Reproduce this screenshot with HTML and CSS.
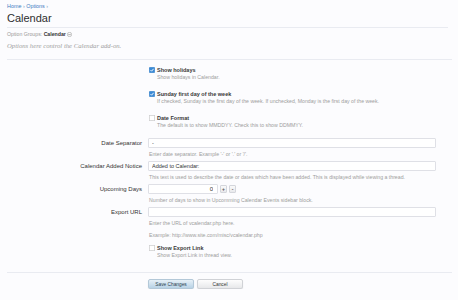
FILE: index.html
```html
<!DOCTYPE html>
<html lang="en">
<head>
    <meta charset="UTF-8">
    <title>Calendar - Options</title>
    <link rel="stylesheet" href="styles.css">
</head>
<body>
    <div class="page">
        <div class="crumbs"><a href="#">Home</a> › <a href="#">Options</a> ›</div>
        <h1>Calendar</h1>

        <div class="groups">Option Groups: <b>Calendar</b> <span class="drop"><svg width="5" height="5" viewBox="0 0 10 10"><circle cx="5" cy="5" r="4.3" fill="#fff" stroke="#8a8a8a" stroke-width="1"/><path d="M3 4.2 L5 6.2 L7 4.2" fill="none" stroke="#555" stroke-width="1.2"/></svg></span></div>
        <p class="explain">Options here control the Calendar add-on.</p>

        <form class="options">
            <dl class="unit check">
                <dt></dt>
                <dd>
                    <label><span class="box on"><svg width="6" height="6" viewBox="0 0 12 12"><rect x="0.5" y="0.5" width="11" height="11" rx="2" fill="#3a8ad6" stroke="#2f78c0"/><path d="M3 6.2 L5.2 8.4 L9.2 3.6" fill="none" stroke="#fff" stroke-width="1.8"/></svg></span>Show holidays</label>
                    <p class="hint">Show holidays in Calendar.</p>
                </dd>
            </dl>
            <dl class="unit check">
                <dt></dt>
                <dd>
                    <label><span class="box on"><svg width="6" height="6" viewBox="0 0 12 12"><rect x="0.5" y="0.5" width="11" height="11" rx="2" fill="#3a8ad6" stroke="#2f78c0"/><path d="M3 6.2 L5.2 8.4 L9.2 3.6" fill="none" stroke="#fff" stroke-width="1.8"/></svg></span>Sunday first day of the week</label>
                    <p class="hint">If checked, Sunday is the first day of the week. If unchecked, Monday is the first day of the week.</p>
                </dd>
            </dl>
            <dl class="unit check">
                <dt></dt>
                <dd>
                    <label><span class="box"><svg width="6" height="6" viewBox="0 0 12 12"><rect x="0.5" y="0.5" width="11" height="11" rx="2" fill="#fff" stroke="#9a9a9a"/></svg></span>Date Format</label>
                    <p class="hint">The default is to show MMDDYY. Check this to show DDMMYY.</p>
                </dd>
            </dl>

            <dl class="unit text">
                <dt>Date Separator</dt>
                <dd>
                    <input class="field" type="text" value="-">
                    <p class="hint">Enter date separator. Example '-' or '.' or '/'.</p>
                </dd>
            </dl>
            <dl class="unit text">
                <dt>Calendar Added Notice</dt>
                <dd>
                    <input class="field" type="text" value="Added to Calendar:">
                    <p class="hint">This text is used to describe the date or dates which have been added. This is displayed while viewing a thread.</p>
                </dd>
            </dl>
            <dl class="unit text">
                <dt>Upcoming Days</dt>
                <dd>
                    <div class="spinner">
                        <input class="field number" type="text" value="0">
                        <span class="spin">+</span>
                        <span class="spin">-</span>
                    </div>
                    <p class="hint">Number of days to show in Upcomming Calendar Events sidebar block.</p>
                </dd>
            </dl>
            <dl class="unit text export">
                <dt>Export URL</dt>
                <dd>
                    <input class="field" type="text" value="">
                    <p class="hint">Enter the URL of vcalendar.php here.</p>
                    <p class="hint example">Example: http://www.site.com/misc/vcalendar.php</p>
                </dd>
            </dl>
            <dl class="unit check">
                <dt></dt>
                <dd>
                    <label><span class="box"><svg width="6" height="6" viewBox="0 0 12 12"><rect x="0.5" y="0.5" width="11" height="11" rx="2" fill="#fff" stroke="#9a9a9a"/></svg></span>Show Export Link</label>
                    <p class="hint">Show Export Link in thread view.</p>
                </dd>
            </dl>

            <div class="submit">
                <button type="button" class="button primary">Save Changes</button>
                <button type="button" class="button">Cancel</button>
            </div>
        </form>
    </div>
</body>
</html>
```

FILE: styles.css
```css
body {
    margin: 0;
    background: #fcfcfe;
    font-family: "Liberation Sans", Arial, sans-serif;
    color: #333;
}
.page {
    padding: 2px 6px 0 7px;
}
.crumbs {
    font-size: 5.4px;
    line-height: 8px;
    color: #7a9cc0;
}
.crumbs a {
    color: #3e7bbf;
    text-decoration: none;
}
h1 {
    margin: 2px 4px 0 0;
    padding-bottom: 3px;
    font-size: 11px;
    line-height: 12px;
    font-weight: normal;
    color: #2e2e2e;
    border-bottom: 1px solid #e9ebf1;
}
.groups {
    margin-top: 2px;
    font-size: 5.2px;
    line-height: 8px;
    color: #999;
}
.groups b {
    color: #333;
}
.drop svg {
    vertical-align: -1px;
}
.explain {
    margin: 4px 0 0;
    padding-bottom: 9px;
    font-family: "Liberation Serif", "Times New Roman", serif;
    font-style: italic;
    font-size: 6.7px;
    line-height: 8px;
    color: #a0a0a0;
    border-bottom: 1px solid #e9ebf1;
}
.options {
    margin-top: 6px;
}
.unit {
    display: grid;
    grid-template-columns: 135px 288px;
    column-gap: 6px;
    margin: 0 0 4px;
}
.unit dt {
    text-align: right;
    font-size: 6px;
    line-height: 10px;
    color: #333;
}
.unit dd {
    margin: 0;
}
.check {
    margin-bottom: 9px;
}
.check label {
    display: block;
    padding-left: 1px;
    font-size: 5.5px;
    font-weight: bold;
    line-height: 8px;
    color: #383838;
}
.box {
    display: inline-block;
    width: 6px;
    height: 6px;
    margin-right: 2px;
    vertical-align: -1px;
}
.box svg {
    display: block;
}
.hint {
    margin: 0;
    font-size: 5.2px;
    line-height: 7px;
    color: #9d9d9d;
}
.check .hint {
    padding-left: 9px;
}
.text .hint {
    margin-top: 3px;
    padding-left: 1px;
    line-height: 6px;
}
.text .example {
    margin-top: 6px;
}
.export {
    margin-bottom: 6px;
}
.field {
    display: block;
    box-sizing: border-box;
    width: 100%;
    height: 10px;
    margin: 0;
    padding: 0 3px;
    border: 1px solid #dfe0e6;
    border-radius: 1px;
    background: #fff;
    font-family: "Liberation Sans", Arial, sans-serif;
    font-size: 5.5px;
    color: #333;
    outline: none;
}
.spinner {
    display: flex;
    align-items: center;
    gap: 2px;
}
.field.number {
    width: 70px;
    text-align: right;
    padding-right: 4px;
    font-size: 6px;
}
.spin {
    box-sizing: border-box;
    width: 7px;
    height: 8px;
    border: 1px solid #d4d6dc;
    border-radius: 1px;
    background: linear-gradient(#fafafa, #e8e9ec);
    font-size: 5px;
    line-height: 6px;
    text-align: center;
    color: #555;
    font-weight: bold;
}
.submit {
    margin-top: 13px;
    padding: 6px 0 0 141px;
    border-top: 1px solid #e9ebf1;
    display: flex;
    gap: 3px;
}
.button {
    box-sizing: border-box;
    width: 46px;
    height: 10px;
    padding: 0;
    border: 1px solid #d0d2d6;
    border-radius: 2px;
    background: linear-gradient(#fdfdfd, #e7e8ea);
    box-shadow: 0 1px 1px rgba(0, 0, 0, 0.12);
    font-family: "Liberation Sans", Arial, sans-serif;
    font-size: 4.8px;
    color: #333;
}
.button.primary {
    border-color: #b3c8d8;
    background: linear-gradient(#e6f0f7, #b8d2e5);
    color: #2d3f4f;
}
```
